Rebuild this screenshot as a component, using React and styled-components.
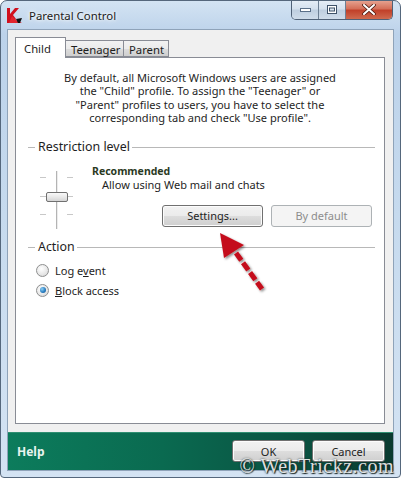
import React from 'react';
import styled, { createGlobalStyle } from 'styled-components';

const GlobalStyle = createGlobalStyle`
  html, body {
    margin: 0;
    padding: 0;
    background: #ffffff;
  }
  body {
    font-family: "Noto Sans", "Liberation Sans", sans-serif;
    font-size: 11px;
    color: #1e1e1e;
  }
`;

const Window = styled.div`
  box-sizing: border-box;
  position: relative;
  width: 401px;
  height: 478px;
  padding: 0 6px 6px 6px;
  border: 1px solid #55677c;
  border-radius: 7px 7px 4px 4px;
  background: linear-gradient(180deg, #d3e3f3 0%, #bcd2ea 7%, #c6daee 45%, #d4e3f3 100%);
  display: flex;
  flex-flow: column nowrap;
  overflow: hidden;
`;

const TitleBar = styled.div`
  height: 28px;
  display: flex;
  flex-flow: row nowrap;
  align-items: center;
`;

const TitleText = styled.span`
  margin: 0 0 0 7px;
  font-size: 11.4px;
  color: #1b1b1b;
  text-shadow: 0 0 6px #ffffff, 0 0 3px #ffffff;
`;

const CaptionGroup = styled.div`
  align-self: flex-start;
  margin: -1px 1px 0 auto;
  height: 19px;
  display: flex;
  flex-flow: row nowrap;
  border: 1px solid #4f6177;
  border-top: none;
  border-radius: 0 0 5px 5px;
  overflow: hidden;
`;

const CaptionButton = styled.div`
  width: ${(p) => p.w}px;
  height: 19px;
  display: flex;
  align-items: center;
  justify-content: center;
  border-left: ${(p) => (p.first ? 'none' : '1px solid #6d7f93')};
  background: ${(p) =>
    p.close
      ? 'linear-gradient(180deg, #e8a795 0%, #d5705a 45%, #c1412a 55%, #cf6a4f 100%)'
      : 'linear-gradient(180deg, #e6eef7 0%, #d5e1ee 45%, #bfcfe0 55%, #cfdcea 100%)'};
`;

const Client = styled.div`
  flex: 1;
  border: 1px solid #8fa3b9;
  background: #f0f0f0;
  display: flex;
  flex-flow: column nowrap;
`;

const Body = styled.div`
  padding: 7px 8px 0 7px;
  display: flex;
  flex-flow: column nowrap;
`;

const TabRow = styled.div`
  height: 20px;
  display: flex;
  flex-flow: row nowrap;
  align-items: flex-end;
  position: relative;
  z-index: 1;
`;

const Tab = styled.div`
  box-sizing: border-box;
  width: ${(p) => p.w}px;
  height: ${(p) => (p.active ? 21 : 17)}px;
  margin: 0 0 ${(p) => (p.active ? -1 : 0)}px ${(p) => (p.active ? 0 : -1)}px;
  padding: ${(p) => (p.active ? '3px 0 0 8px' : '1px 0 0 5px')};
  border: 1px solid #898c95;
  border-bottom: ${(p) => (p.active ? 'none' : '1px solid #898c95')};
  background: ${(p) =>
    p.active ? '#ffffff' : 'linear-gradient(180deg, #f2f2f2 0%, #ebebeb 50%, #dddddd 51%, #cfcfcf 100%)'};
  font-size: 11.3px;
  color: #1e1e1e;
`;

const Panel = styled.div`
  box-sizing: border-box;
  height: 367px;
  border: 1px solid #898c95;
  background: #ffffff;
  display: flex;
  flex-flow: column nowrap;
`;

const Intro = styled.p`
  margin: 13px 0 0 0;
  text-align: center;
  font-size: 11.05px;
  line-height: 13.4px;
  color: #1e1e1e;
`;

const GroupHeader = styled.div`
  margin: ${(p) => p.top}px 9px 0 12px;
  height: 18px;
  display: flex;
  flex-flow: row nowrap;
  align-items: center;
  font-size: 12.4px;
  color: #1e1e1e;

  &::before {
    content: '';
    width: 7px;
    height: 1px;
    margin: 1px 3px 0 0;
    background: #b8b8b8;
  }

  &::after {
    content: '';
    flex: 1;
    height: 1px;
    margin: 1px 0 0 2px;
    background: #b8b8b8;
  }
`;

const LevelRow = styled.div`
  margin: 8px 0 0 24px;
  display: flex;
  flex-flow: row nowrap;
  align-items: flex-start;
`;

const SliderBox = styled.div`
  margin: 7px 0 0 0;
  width: 34px;
  height: 58px;
`;

const LevelInfo = styled.div`
  margin: 0 0 0 18px;
  display: flex;
  flex-flow: column nowrap;
`;

const LevelName = styled.div`
  font-weight: bold;
  font-size: 10.5px;
  line-height: 14px;
  color: #2b3a1f;
`;

const LevelText = styled.div`
  margin: 0 0 0 10px;
  font-size: 11px;
  line-height: 14px;
`;

const ButtonRow = styled.div`
  margin: ${(p) => p.top}px 0 0 ${(p) => p.left}px;
  display: flex;
  flex-flow: row nowrap;
  gap: ${(p) => p.gap}px;
`;

const Button = styled.div`
  box-sizing: border-box;
  width: ${(p) => p.w}px;
  height: 22px;
  display: flex;
  align-items: center;
  justify-content: center;
  border: 1px solid ${(p) => (p.disabled ? '#adb2b5' : '#707070')};
  border-radius: 3px;
  background: ${(p) =>
    p.disabled
      ? '#f4f4f4'
      : 'linear-gradient(180deg, #f2f2f2 0%, #ebebeb 50%, #dddddd 51%, #cfcfcf 100%)'};
  box-shadow: inset 0 0 0 1px ${(p) => (p.disabled ? '#f4f4f4' : '#fcfcfc')};
  font-size: 11px;
  color: ${(p) => (p.disabled ? '#8d8d8d' : '#1e1e1e')};
`;

const RadioList = styled.div`
  margin: 8px 0 0 20px;
  display: flex;
  flex-flow: column nowrap;
  gap: 7px;
`;

const RadioRow = styled.div`
  height: 13px;
  display: flex;
  flex-flow: row nowrap;
  align-items: center;
  gap: 6px;
  font-size: 11px;
`;

const RadioCircle = styled.span`
  box-sizing: border-box;
  width: 13px;
  height: 13px;
  border-radius: 50%;
  border: 1px solid #8e8f8f;
  background: radial-gradient(circle at 40% 35%, #ffffff 0%, #e6e6e6 60%, #d0d0d0 100%);
  display: flex;
  align-items: center;
  justify-content: center;

  &::after {
    content: '';
    display: ${(p) => (p.checked ? 'block' : 'none')};
    width: 6px;
    height: 6px;
    border-radius: 50%;
    background: radial-gradient(circle at 35% 35%, #8fd0f5 0%, #2a7fc2 55%, #0d4f8c 100%);
  }
`;

const Footer = styled.div`
  margin: 8px 0 0 0;
  height: 38px;
  padding: 0 8px 0 9px;
  display: flex;
  flex-flow: row nowrap;
  align-items: center;
  background: linear-gradient(90deg, #0c7c5c 0%, #0a6a50 40%, #0a5644 70%, #0a3a30 100%);
  box-shadow: inset 0 1px 0 #2f8f72;
`;

const HelpLink = styled.span`
  font-size: 12px;
  font-weight: bold;
  color: #e8f4ef;
`;

const FooterButtons = styled.div`
  margin: 0 0 0 auto;
  display: flex;
  flex-flow: row nowrap;
  gap: 7px;
`;

const Overlay = styled.svg`
  position: absolute;
  left: -1px;
  top: -1px;
  pointer-events: none;
`;

const Watermark = styled.span`
  position: absolute;
  right: 6px;
  bottom: -1px;
  font-family: "Liberation Serif", serif;
  font-size: 20px;
  letter-spacing: 0.5px;
  color: rgba(255, 255, 255, 0.85);
  text-shadow: 0 0 2px #1d2a2a, 1px 1px 1px #1d2a2a;
  pointer-events: none;
`;

const AppIcon = () => (
  <svg width="15" height="15" viewBox="0 0 15 15">
    <polygon points="0,0 3,0 3,6 8,0 12,0 6,7 9,11 6,15 0,15" fill="#d0101e" />
    <polygon points="2,15 5,8 9,12 15,15 10,15" fill="#e2252f" />
    <polygon points="9,11 15,10 13,15 11,15" fill="#111111" />
  </svg>
);

const Slider = () => (
  <SliderBox>
    <svg width="34" height="58" viewBox="0 0 34 58">
      <g stroke="#c8c8c8" strokeWidth="1">
        <line x1="0" y1="6.5" x2="6" y2="6.5" />
        <line x1="27" y1="6.5" x2="33" y2="6.5" />
        <line x1="0" y1="25.5" x2="6" y2="25.5" />
        <line x1="27" y1="25.5" x2="33" y2="25.5" />
        <line x1="0" y1="43.5" x2="6" y2="43.5" />
        <line x1="27" y1="43.5" x2="33" y2="43.5" />
      </g>
      <line x1="16.5" y1="0" x2="16.5" y2="58" stroke="#b4b4b4" strokeWidth="1" />
      <line x1="17.5" y1="0" x2="17.5" y2="58" stroke="#ececec" strokeWidth="1" />
      <defs>
        <linearGradient id="thumb" x1="0" y1="0" x2="0" y2="1">
          <stop offset="0" stopColor="#fbfbfb" />
          <stop offset="0.5" stopColor="#e9e9e9" />
          <stop offset="1" stopColor="#d2d2d2" />
        </linearGradient>
      </defs>
      <rect x="6.5" y="21.5" width="21" height="9" rx="1.5" fill="url(#thumb)" stroke="#707070" />
    </svg>
  </SliderBox>
);

const App = () => {
  return (
    <>
      <GlobalStyle />
      <Window>
        <TitleBar>
          <AppIcon />
          <TitleText>Parental Control</TitleText>
          <CaptionGroup>
            <CaptionButton w={26} first>
              <svg width="11" height="4" viewBox="0 0 11 4">
                <rect x="0.5" y="0.5" width="10" height="3" fill="#ffffff" stroke="#5a6f88" />
              </svg>
            </CaptionButton>
            <CaptionButton w={26}>
              <svg width="10" height="9" viewBox="0 0 10 9">
                <rect x="0.5" y="0.5" width="9" height="8" fill="#ffffff" stroke="#3e5269" />
                <rect x="2.5" y="3" width="5" height="3" fill="#d8e3ee" stroke="#3e5269" strokeWidth="1" />
              </svg>
            </CaptionButton>
            <CaptionButton w={46} close>
              <svg width="14" height="11" viewBox="0 0 14 11">
                <path d="M2 1 L12 10 M12 1 L2 10" stroke="#4a1a10" strokeWidth="3.6" strokeLinecap="round" />
                <path d="M2 1 L12 10 M12 1 L2 10" stroke="#ffffff" strokeWidth="2" strokeLinecap="round" />
              </svg>
            </CaptionButton>
          </CaptionGroup>
        </TitleBar>

        <Client>
          <Body>
            <TabRow>
              <Tab active w={51}>Child</Tab>
              <Tab w={59}>Teenager</Tab>
              <Tab w={46}>Parent</Tab>
            </TabRow>
            <Panel>
              <Intro>
                By default, all Microsoft Windows users are assigned
                <br />
                the "Child" profile. To assign the "Teenager" or
                <br />
                "Parent" profiles to users, you have to select the
                <br />
                corresponding tab and check "Use profile".
              </Intro>

              <GroupHeader top={13}>Restriction level</GroupHeader>
              <LevelRow>
                <Slider />
                <LevelInfo>
                  <LevelName>Recommended</LevelName>
                  <LevelText>Allow using Web mail and chats</LevelText>
                  <ButtonRow top={13} left={70} gap={8}>
                    <Button w={101}>Settings...</Button>
                    <Button w={101} disabled>By default</Button>
                  </ButtonRow>
                </LevelInfo>
              </LevelRow>

              <GroupHeader top={9}>Action</GroupHeader>
              <RadioList>
                <RadioRow>
                  <RadioCircle />
                  <span>
                    Log e<u>v</u>ent
                  </span>
                </RadioRow>
                <RadioRow>
                  <RadioCircle checked />
                  <span>
                    <u>B</u>lock access
                  </span>
                </RadioRow>
              </RadioList>
            </Panel>
          </Body>

          <Footer>
            <HelpLink>Help</HelpLink>
            <FooterButtons>
              <Button w={73}>OK</Button>
              <Button w={73}>Cancel</Button>
            </FooterButtons>
          </Footer>
        </Client>

        <Overlay width="401" height="478" viewBox="0 0 401 478">
          <defs>
            <filter id="arrowShadow" x="-20%" y="-20%" width="140%" height="140%">
              <feDropShadow dx="1.5" dy="1.5" stdDeviation="1.2" floodColor="#000000" floodOpacity="0.45" />
            </filter>
          </defs>
          <g filter="url(#arrowShadow)">
            <line
              x1="236"
              y1="253"
              x2="262"
              y2="289"
              stroke="#c4111c"
              strokeWidth="5"
              strokeDasharray="9 3"
            />
            <polygon points="220,233 244,245 224,258" fill="#c4111c" />
          </g>
        </Overlay>
        <Watermark>© WebTrickz.com</Watermark>
      </Window>
    </>
  );
};

export default App;
